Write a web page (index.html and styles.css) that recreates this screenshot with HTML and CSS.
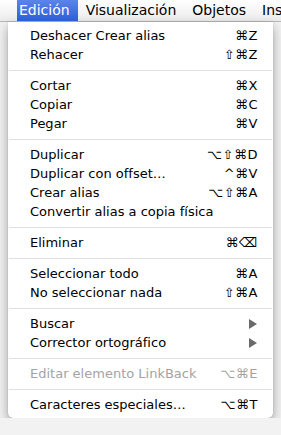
FILE: index.html
```html
<!DOCTYPE html>
<html lang="es">

<head>
    <meta charset="UTF-8">
    <meta name="viewport" content="width=device-width, initial-scale=1.0">
    <title>Edición</title>
    <link rel="stylesheet" href="styles.css">
</head>

<body>
    <header class="menubar">
        <span class="bar-item active">Edición</span>
        <span class="bar-item">Visualización</span>
        <span class="bar-item">Objetos</span>
        <span class="bar-item">Ins</span>
    </header>

    <div class="menu">
        <div class="item"><span>Deshacer Crear alias</span><span class="key">⌘Z</span></div>
        <div class="item"><span>Rehacer</span><span class="key">⇧⌘Z</span></div>
        <div class="sep"></div>
        <div class="item"><span>Cortar</span><span class="key">⌘X</span></div>
        <div class="item"><span>Copiar</span><span class="key">⌘C</span></div>
        <div class="item"><span>Pegar</span><span class="key">⌘V</span></div>
        <div class="sep"></div>
        <div class="item"><span>Duplicar</span><span class="key">⌥⇧⌘D</span></div>
        <div class="item"><span>Duplicar con offset…</span><span class="key">^⌘V</span></div>
        <div class="item"><span>Crear alias</span><span class="key">⌥⇧⌘A</span></div>
        <div class="item"><span>Convertir alias a copia física</span></div>
        <div class="sep"></div>
        <div class="item"><span>Eliminar</span><span class="key">⌘⌫</span></div>
        <div class="sep"></div>
        <div class="item"><span>Seleccionar todo</span><span class="key">⌘A</span></div>
        <div class="item"><span>No seleccionar nada</span><span class="key">⇧⌘A</span></div>
        <div class="sep"></div>
        <div class="item"><span>Buscar</span><span class="arrow"></span></div>
        <div class="item"><span>Corrector ortográfico</span><span class="arrow"></span></div>
        <div class="sep"></div>
        <div class="item disabled"><span>Editar elemento LinkBack</span><span class="key">⌥⌘E</span></div>
        <div class="sep"></div>
        <div class="item"><span>Caracteres especiales…</span><span class="key">⌥⌘T</span></div>
    </div>
</body>

</html>
```

FILE: styles.css
```css
body {
    font-family: 'DejaVu Sans', sans-serif;
    font-size: 13px;
    margin: 0;
    padding: 0;
    background: #f2f2f2;
    color: #000;
    overflow: hidden;
}

.menubar {
    display: flex;
    height: 21px;
    padding-left: 17px;
    background: linear-gradient(#ffffff, #ececec);
    border-bottom: 1px solid #b8b8b8;
    white-space: nowrap;
    font-size: 14px;
    overflow: hidden;
}

.bar-item {
    line-height: 21px;
    padding: 0 8px;
}

.bar-item.active {
    padding: 0 8px 0 2px;
    background: linear-gradient(#5c85ea, #2d5cd8);
    color: white;
}

.menu {
    margin-left: 8px;
    width: 265px;
    padding: 4px 0;
    background: #ffffff;
    border-radius: 0 0 5px 5px;
    box-shadow: 0 5px 12px rgba(0, 0, 0, 0.35), 0 0 1px rgba(0, 0, 0, 0.3);
}

.item {
    display: flex;
    justify-content: space-between;
    align-items: center;
    height: 19px;
    padding: 0 15px 0 22px;
    white-space: nowrap;
}

.item .key {
    letter-spacing: 0.5px;
}

.item.disabled {
    color: #a3a3a3;
}

.arrow {
    width: 0;
    height: 0;
    border-top: 5px solid transparent;
    border-bottom: 5px solid transparent;
    border-left: 8px solid #6a6a6a;
    margin-right: 1px;
}

.sep {
    height: 12px;
    display: flex;
    align-items: center;
    padding: 0 1px;
}

.sep::after {
    content: '';
    flex: 1;
    height: 1px;
    background: #e0e0e0;
}
```
